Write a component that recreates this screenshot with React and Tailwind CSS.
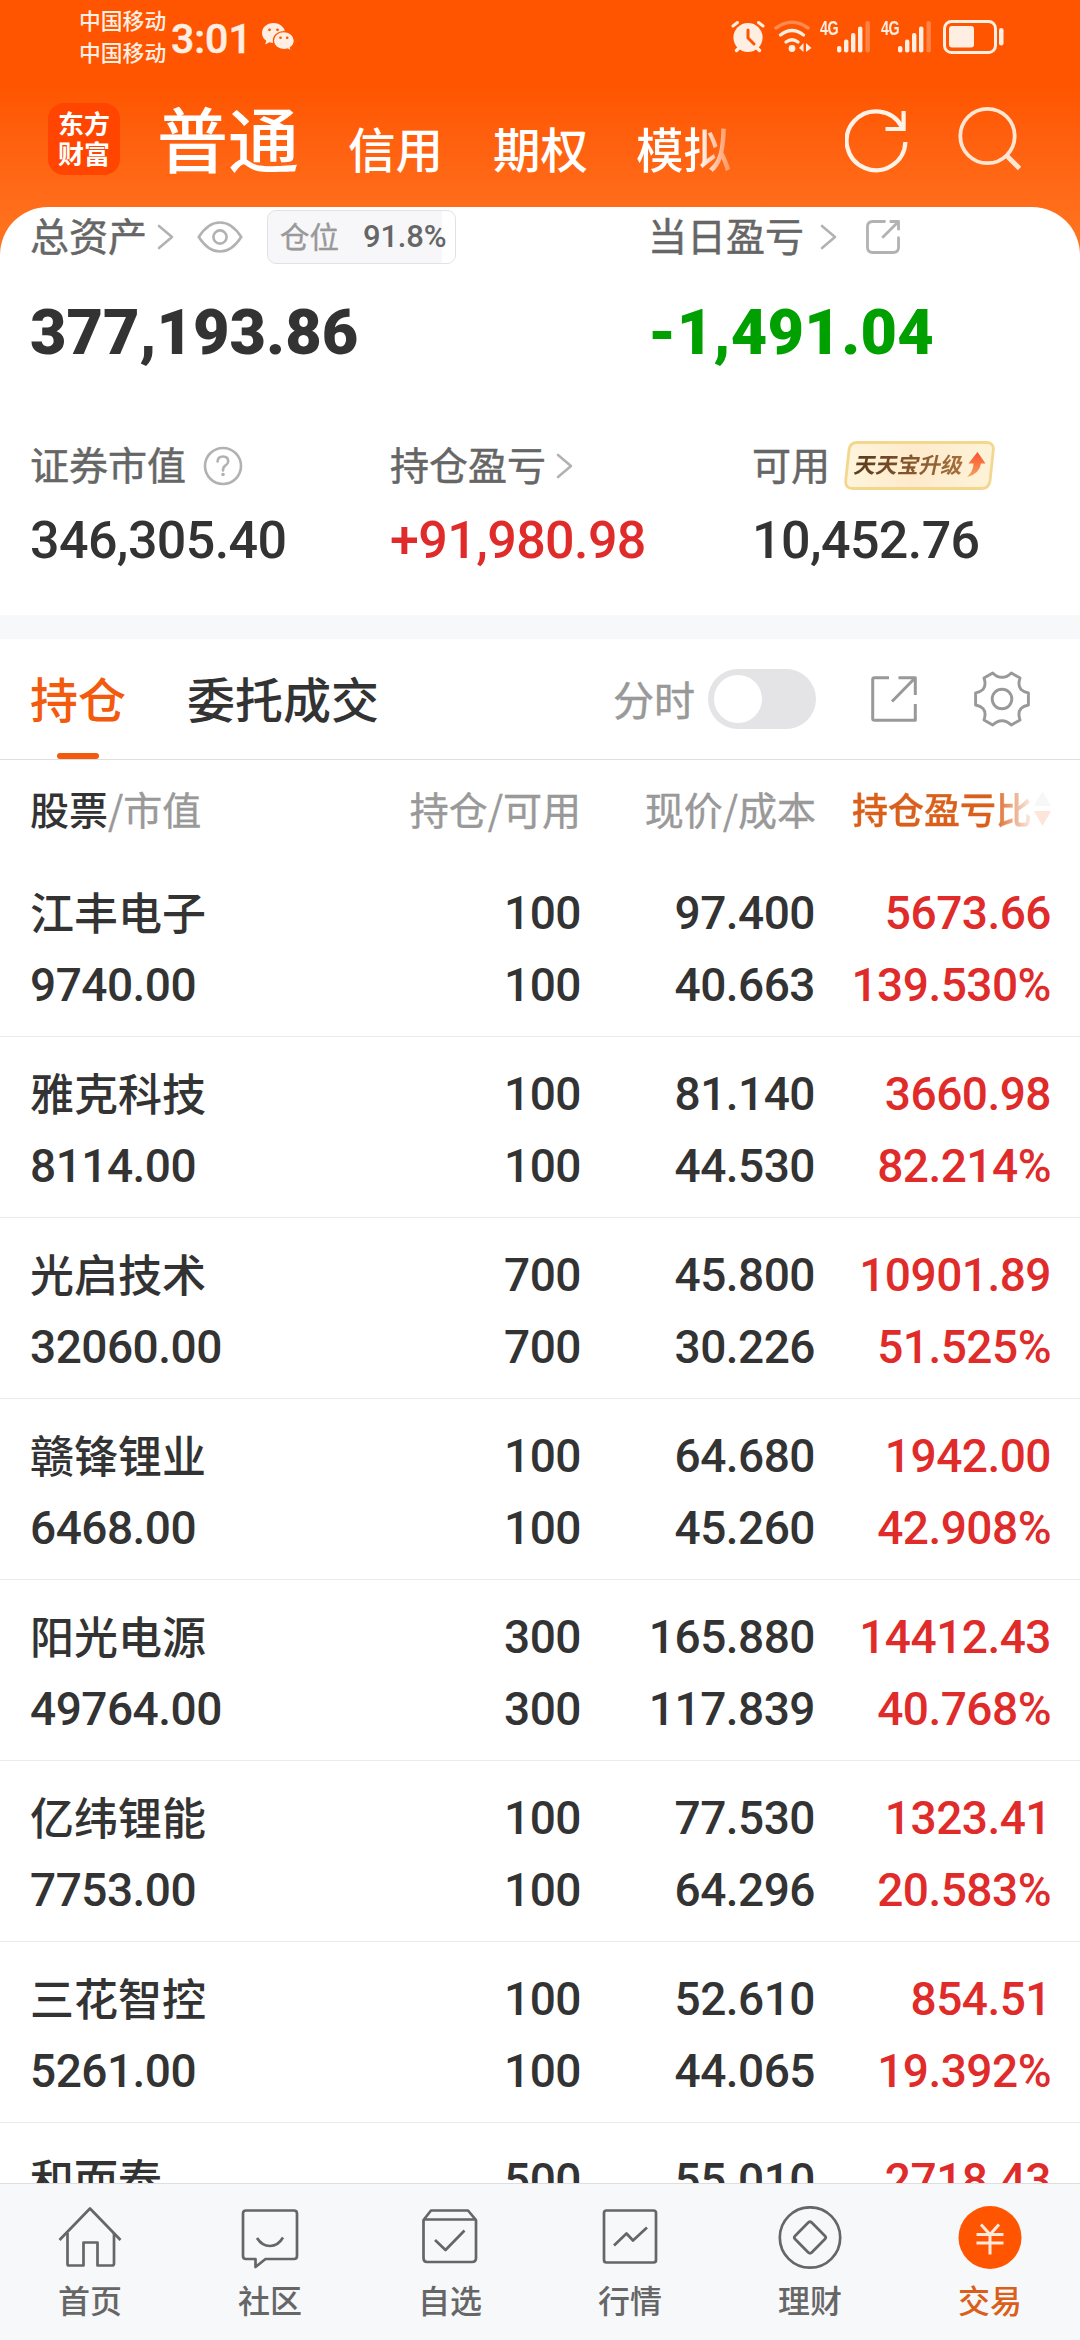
import React from "react";

const CJK = "font-['Noto_Sans_CJK_SC',sans-serif]";
const NUM = "font-['Roboto','Noto_Sans_CJK_SC',sans-serif]";

const holdings = [
  ["江丰电子", "9740.00", "100", "100", "97.400", "40.663", "5673.66", "139.530%"],
  ["雅克科技", "8114.00", "100", "100", "81.140", "44.530", "3660.98", "82.214%"],
  ["光启技术", "32060.00", "700", "700", "45.800", "30.226", "10901.89", "51.525%"],
  ["赣锋锂业", "6468.00", "100", "100", "64.680", "45.260", "1942.00", "42.908%"],
  ["阳光电源", "49764.00", "300", "300", "165.880", "117.839", "14412.43", "40.768%"],
  ["亿纬锂能", "7753.00", "100", "100", "77.530", "64.296", "1323.41", "20.583%"],
  ["三花智控", "5261.00", "100", "100", "52.610", "44.065", "854.51", "19.392%"],
  ["和而泰", "27505.00", "500", "500", "55.010", "49.573", "2718.43", "10.967%"],
];

function Chevron({ className }) {
  return (
    <svg className={className} width="17" height="26" viewBox="0 0 17 26" fill="none" stroke="#b2b2b2" strokeWidth="2.6" strokeLinecap="round" strokeLinejoin="round">
      <path d="M2 2 L15 13 L2 24" />
    </svg>
  );
}

function Signal() {
  return (
    <div className="flex h-[33px] w-[51px]">
      <span className="w-[17px] origin-left scale-x-[0.68] font-['Liberation_Sans',sans-serif] text-[21px] leading-[16px] font-bold tracking-[-0.500px]">4G</span>
      <svg width="34" height="33" viewBox="0 0 34 33" fill="#ffeee2">
        <rect x="0" y="26" width="4.4" height="6.5" rx="2" />
        <rect x="7" y="19.500" width="4.400" height="13" rx="2" />
        <rect x="14" y="13" width="4.4" height="19.500" rx="2" />
        <rect x="21" y="6.500" width="4.400" height="26" rx="2" />
        <rect x="28.500" y="1" width="4.400" height="31.500" rx="2" opacity="0.3" />
      </svg>
    </div>
  );
}

function StatusBar() {
  return (
    <div className="flex h-[76px] shrink-0 text-[#ffeee2]">
      <div className={`${CJK} ml-[79px] mt-[4px] w-[92px] text-[21.800px] leading-[31.500px] font-medium whitespace-nowrap`}>
        <div>中国移动</div>
        <div>中国移动</div>
      </div>
      <div className={`${NUM} mt-[18px] w-[91px] text-[41px] leading-[42px] font-medium whitespace-nowrap [-webkit-text-stroke:0.5px]`}>3:01</div>
      <svg className="mt-[23px]" width="33" height="28" viewBox="0 0 33 28">
        <path fill="#ffeee2" d="M11.500 0C5 0 0 4.400 0 10c0 3.200 1.700 6 4.300 7.800L3.200 21.500l4.300-2.200c1.300.4 2.600.6 4 .6C18 19.900 23 15.500 23 10S18 0 11.500 0Z" />
        <path fill="#ffeee2" stroke="#ff5500" strokeWidth="1.200" d="M21.800 8.700c-5.800 0-10.400 3.900-10.400 8.900s4.600 8.900 10.400 8.900c1.300 0 2.500-.2 3.600-.5l3.900 2-.9-3.300c2.400-1.600 3.900-4.100 3.900-7.100 0-5-4.700-8.900-10.500-8.900Z" />
        <g fill="#ff5500">
          <circle cx="7.500" cy="6.800" r="1.400" /><circle cx="15.500" cy="6.800" r="1.400" />
          <circle cx="18.500" cy="14.800" r="1.300" /><circle cx="25.200" cy="14.800" r="1.300" />
        </g>
      </svg>
      <div className="ml-[436px] mt-[20px] flex h-[34px]">
        <svg width="34" height="33" viewBox="0 0 34 33" fill="none">
          <path d="M2 6 L6.500 2.500 M32 6 L27.500 2.500" stroke="#ffeee2" strokeWidth="3" strokeLinecap="round" />
          <circle cx="17" cy="17.500" r="14.600" fill="#ffeee2" />
          <path d="M5.500 30.500 L8 28 M28.500 30.500 L26 28" stroke="#ffeee2" strokeWidth="3.400" strokeLinecap="round" />
          <path d="M17 10 V18 L23 24" stroke="#ff5500" strokeWidth="3" strokeLinecap="round" />
        </svg>
        <svg className="ml-[9px]" width="39" height="33" viewBox="0 0 39 33" fill="none" stroke="#ffeee2" strokeWidth="3.400" strokeLinecap="round">
          <path d="M2 8 Q18 -3.500 34 8" opacity="0.35" />
          <path d="M6.500 15 Q18 6 29.500 15" />
          <path d="M12 22 Q18 17.500 24 22" />
          <circle cx="18" cy="28.500" r="3.400" fill="#ffeee2" stroke="none" />
          <path d="M29.500 23 V32 L25 28 Z M32 23 V32 L37.500 28 Z" fill="#ffeee2" stroke="none" />
        </svg>
        <div className="ml-[7px]"><Signal /></div>
        <div className="ml-[10px]"><Signal /></div>
        <svg className="ml-[11px]" width="62" height="34" viewBox="0 0 62 34" fill="none">
          <rect x="1.500" y="1.500" width="51" height="31" rx="7" stroke="#ffeee2" strokeWidth="3" />
          <rect x="6" y="6" width="25" height="21.500" rx="3" fill="#ffeee2" />
          <rect x="56" y="8" width="4.500" height="17.500" rx="2.200" fill="#ffeee2" />
        </svg>
      </div>
    </div>
  );
}

function TopNav() {
  return (
    <div className={`${CJK} flex h-[131px] shrink-0 whitespace-nowrap text-white`}>
      <div className="ml-[48px] mt-[27px] h-[72px] w-[72px] rounded-[16px] bg-[#ff4500] pt-[5px] text-center text-[26px] leading-[30px] font-bold">
        东方<br />财富
      </div>
      <div className="ml-[37px] mt-[20px] w-[191px] text-[71px] leading-[80px] font-medium">普通</div>
      <div className="mt-[44px] flex text-[47.500px] leading-[56px] font-medium">
        <div className="w-[145px]">信用</div>
        <div className="w-[143px]">期权</div>
        <div className="w-[95px] bg-gradient-to-r from-white from-65% to-white/30 bg-clip-text text-transparent">模拟</div>
      </div>
      <svg className="ml-[114px] mt-[31px]" width="64" height="66" viewBox="0 0 64 66" fill="none" stroke="#fff3e8" strokeWidth="4.200">
        <path d="M57 20 A29.400 29.400 0 1 0 60.400 35" />
        <path d="M40.500 22 H58.600 V4" />
      </svg>
      <svg className="ml-[49px] mt-[30px]" width="64" height="66" viewBox="0 0 64 66" fill="none" stroke="#ffe6d2" strokeWidth="3.800">
        <circle cx="29.500" cy="30" r="27.200" />
        <path d="M48.500 49.500 L61.500 62.500" strokeWidth="4.800" />
      </svg>
    </div>
  );
}

function Share({ className, size, color, rounded }) {
  return (
    <svg className={className} width={size} height={size} viewBox="0 0 46 46" fill="none" stroke={color} strokeWidth={rounded ? 3.8 : 3} strokeLinejoin="round">
      {rounded ? (
        <path d="M25 2 H9 Q2 2 2 9 V37 Q2 44 9 44 H37 Q44 44 44 37 V24" strokeLinecap="round" />
      ) : (
        <path d="M18 1.700 H3.500 Q1.700 1.700 1.700 3.500 V42.500 Q1.700 44.300 3.500 44.300 H44.300 V28" />
      )}
      <path d={rounded ? "M22 24 L44 2 M32 2 H44 V14" : "M21 25.500 L43.500 2.500 M27.500 1.700 H44.300 V19"} />
    </svg>
  );
}

function UpgradeBadge() {
  return (
    <div className="relative ml-[14px] mt-[-1px] h-[49px] w-[151px]">
      <svg className="absolute inset-0" width="151" height="49" viewBox="0 0 151 49">
        <defs>
          <linearGradient id="badge" x1="0" x2="1"><stop offset="0" stopColor="#fdf5dc" /><stop offset="0.45" stopColor="#ffeacb" /><stop offset="1" stopColor="#fdf3d8" /></linearGradient>
          <linearGradient id="arrow" x1="0" y1="0" x2="0" y2="1"><stop offset="0" stopColor="#f9502e" /><stop offset="1" stopColor="#f6a25e" /></linearGradient>
        </defs>
        <path d="M13 1.500 H142 Q150 1.500 149.300 9 L146 40 Q145 47.500 137 47.500 H9 Q1 47.500 1.700 39.500 L5 9 Q6 1.500 13 1.500 Z" fill="url(#badge)" stroke="#f3d78f" strokeWidth="2.800" />
        <path d="M133.500 11 L141.500 22.500 H137 Q135.500 33 123 36 Q129.500 30 129.500 22.500 H124.500 Z" fill="url(#arrow)" />
      </svg>
      <span className={`${CJK} absolute left-[11px] top-[8px] -skew-x-12 bg-gradient-to-r from-[#5b3a1c] to-[#a9703c] bg-clip-text text-[21.700px] leading-[30px] font-bold whitespace-nowrap text-transparent`}>天天宝升级</span>
    </div>
  );
}

function Summary() {
  const label = "relative top-[-3px] text-[39px] leading-[48px] font-normal text-[#666] whitespace-nowrap [-webkit-text-stroke:0.5px]";
  const big = `${NUM} text-[63px] leading-[70px] font-black whitespace-nowrap`;
  const mid = `${NUM} text-[52px] leading-[60px] font-medium tracking-[-0.600px] whitespace-nowrap`;
  return (
    <div className={`${CJK} h-[408px] shrink-0 rounded-t-[48px] bg-white`}>
      <div className="flex h-[144px]">
        <div className="w-[648px] pl-[30px]">
          <div className="flex h-[60px] items-center">
            <span className={label}>总资产</span>
            <Chevron className="ml-[10px]" />
            <svg className="ml-[23px]" width="46" height="32" viewBox="0 0 46 32" fill="none" stroke="#b2b2b2" strokeWidth="2.600">
              <path d="M1.800 16 Q11 1.500 23 1.500 T44.200 16 Q35 30.500 23 30.500 T1.800 16 Z" />
              <circle cx="23" cy="16" r="6.600" />
            </svg>
            <div className="ml-[24px] flex h-[54px] w-[189px] items-center rounded-[9px] border border-[#e2e2e5] bg-linear-to-r from-[#f7f7fa] from-[93%] to-white to-[93%] pl-[12px]">
              <span className="mt-[-4px] text-[29.500px] leading-[40px] text-[#999] [-webkit-text-stroke:0.4px]">仓位</span>
              <span className="ml-[24px] font-['Roboto',sans-serif] text-[31px] leading-[40px] font-medium tracking-[-0.200px] text-[#666]">91.8%</span>
            </div>
          </div>
          <div className={`${big} mt-[31px] text-[#333]`}>377,193.86</div>
        </div>
        <div>
          <div className="flex h-[60px] items-center">
            <span className={label}>当日盈亏</span>
            <Chevron className="ml-[16px]" />
            <Share className="ml-[29px]" size="34" color="#b2b2b2" rounded />
          </div>
          <div className={`${big} mt-[31px] tracking-[0.300px] text-[#00a000]`}>-1,491.04</div>
        </div>
      </div>
      <div className="mt-[91px] flex">
        <div className="w-[390px] pl-[30px]">
          <div className="flex h-[48px] items-center">
            <span className={label}>证券市值</span>
            <svg className="ml-[17px]" width="40" height="40" viewBox="0 0 40 40" fill="none" stroke="#b2b2b2" strokeWidth="2.600">
              <circle cx="20" cy="20" r="18" />
              <path d="M14.600 15.500 Q14.800 10.500 20 10.500 T25.200 15.500 Q25 18 22.300 19.600 Q20 21 20 24.500" strokeLinecap="round" />
              <circle cx="20" cy="28.500" r="1.800" fill="#b2b2b2" stroke="none" />
            </svg>
          </div>
          <div className={`${mid} mt-[21px] text-[#333]`}>346,305.40</div>
        </div>
        <div className="w-[362px]">
          <div className="flex h-[48px] items-center">
            <span className={label}>持仓盈亏</span>
            <Chevron className="ml-[10px]" />
          </div>
          <div className={`${mid} mt-[21px] text-[#e02b2b]`}>+91,980.98</div>
        </div>
        <div>
          <div className="flex h-[48px] items-center">
            <span className={label}>可用</span>
            <UpgradeBadge />
          </div>
          <div className={`${mid} mt-[21px] text-[#333]`}>10,452.76</div>
        </div>
      </div>
    </div>
  );
}

function Tabs() {
  return (
    <div className={`${CJK} flex h-[121px] shrink-0 items-start border-b border-[#dedede] font-medium whitespace-nowrap`}>
      <div className="flex w-[156px] flex-col pl-[30px] text-[#f35a0e]">
        <span className="mt-[28px] text-[48px] leading-[60px]">持仓</span>
        <span className="ml-[27px] mt-[26px] h-[6px] w-[42px] rounded-full bg-[#f35a0e]" />
      </div>
      <span className="ml-[31px] mt-[28px] w-[426px] text-[48px] leading-[60px] text-[#333]">委托成交</span>
      <span className="mt-[34px] w-[95px] text-[41px] leading-[50px] font-normal text-[#999] [-webkit-text-stroke:0.5px]">分时</span>
      <div className="mt-[30px] h-[60px] w-[108px] rounded-full bg-[#e4e4e6] p-[6px]">
        <div className="h-[48px] w-[48px] rounded-full bg-white" />
      </div>
      <Share className="ml-[55px] mt-[37px]" size="46" color="#999" />
      <svg className="ml-[57px] mt-[32px]" width="56" height="56" viewBox="0 0 56 56" fill="none" stroke="#999" strokeWidth="2.900" strokeLinejoin="round">
        <path d="M18.700 1.900 L10 7 Q12.500 14.500 9 18.500 Q6.500 20.800 1.600 22 V34 Q6.500 35.200 9 37.500 Q12.500 41.500 10 49 L18.700 54.100 Q23 49.700 28 49.700 T37.300 54.100 L46 49 Q43.500 41.500 47 37.500 Q49.500 35.200 54.400 34 V22 Q49.500 20.800 47 18.500 Q43.500 14.500 46 7 L37.300 1.900 Q33 6.300 28 6.300 T18.700 1.900 Z" />
        <circle cx="28" cy="28" r="9.800" />
      </svg>
    </div>
  );
}

function TableHead() {
  return (
    <div className={`${CJK} grid h-[96px] shrink-0 grid-cols-[300px_251px_235px_235px] items-center pl-[30px] text-[39px] leading-[50px] whitespace-nowrap text-[#999] [-webkit-text-stroke:0.4px]`}>
      <div><span className="font-medium text-[#333] [-webkit-text-stroke:0]">股票</span>/市值</div>
      <div className="text-right">持仓/可用</div>
      <div className="text-right">现价/成本</div>
      <div className="flex items-center justify-end">
        <span className="bg-gradient-to-r from-[#d95f1a] from-78% to-[#d95f1a]/10 bg-clip-text text-[36px] font-medium text-transparent">持仓盈亏比</span>
        <svg className="ml-[2px]" width="17" height="35" viewBox="0 0 17 35">
          <path d="M8.500 0 L17 15 H0 Z" fill="#f7f7f7" />
          <path d="M8.500 35 L17 20 H0 Z" fill="#fde5d9" />
        </svg>
      </div>
    </div>
  );
}

function Row({ data }) {
  const [name, value, qty, avail, price, cost, pl, pct] = data;
  return (
    <div className={`${NUM} grid h-[181px] shrink-0 grid-cols-[300px_251px_234px_236px] grid-rows-[72px_72px] border-b border-[#ebebeb] pl-[30px] pt-[21px] text-right text-[46px] leading-[72px] font-medium tracking-[-0.500px] whitespace-nowrap text-[#333]`}>
      <span className={`${CJK} mt-[-2px] text-left text-[44px] tracking-normal`}>{name}</span>
      <span>{qty}</span>
      <span>{price}</span>
      <span className="text-[#e02b2b]">{pl}</span>
      <span className="text-left">{value}</span>
      <span>{avail}</span>
      <span>{cost}</span>
      <span className="text-[#e02b2b]">{pct}</span>
    </div>
  );
}

const icons = {
  home: <><path d="M1.500 34 L32 2.500 L62.500 34" /><path d="M9.500 27 V58 Q9.500 59.500 11 59.500 H25.500 V36.500 H39.500 V59.500 H54 Q56 59.500 56 57.500 V27" /></>,
  chat: <><path d="M8 4.500 H56 Q59 4.500 59 7.500 V50 Q59 53 56 53 H27.500 L17.500 61 V53 H8 Q5 53 5 50 V7.500 Q5 4.500 8 4.500 Z" /><path d="M19 32 Q24 40 32 40 T45 31.500" /></>,
  pick: <><path d="M5.500 14 L13 4.500 H50 L58 14 V52 Q58 56 54 56 H9 Q5.500 56 5.500 52 Z M5.500 13.500 H58" /><path d="M17 34 L27.500 44 L46.500 24.500" /></>,
  chart: <><rect x="6" y="4.500" width="52" height="52" rx="2.500" /><path d="M16 39.500 L28.500 27.500 L35 34.500 L49 21.500" /></>,
  wealth: <><circle cx="32" cy="31.500" r="30.200" /><path d="M30.300 16.500 Q32 15 33.700 16.500 L47 30 Q48.500 31.500 47 33 L33.700 46.500 Q32 48 30.300 46.500 L17 33 Q15.500 31.500 17 30 Z" /></>,
};

function BottomNav() {
  const items = [["home", "首页"], ["chat", "社区"], ["pick", "自选"], ["chart", "行情"], ["wealth", "理财"]];
  return (
    <div className={`${CJK} flex h-[157px] shrink-0 border-t border-[#dedede] bg-[#f7f8fa] text-[32px] leading-[44px] font-medium text-[#666]`}>
      {items.map(([k, t]) => (
        <div key={k} className="flex w-[180px] flex-col items-center pt-[22px]">
          <svg width="64" height="66" viewBox="0 0 64 66" fill="none" stroke="#666" strokeWidth="2.700" strokeLinejoin="round">{icons[k]}</svg>
          <span className="mt-[5px]">{t}</span>
        </div>
      ))}
      <div className="flex w-[180px] flex-col items-center pt-[22px] text-[#d95f1a]">
        <svg width="64" height="66" viewBox="0 0 64 66" fill="none">
          <circle cx="32" cy="31.500" r="31.500" fill="#ff5500" />
          <path d="M23 18.500 L32 28.500 L41 18.500 M32 28.500 V48.500 M18.500 28.500 H45.500 M18.500 37 H45.500" stroke="#ffe9dc" strokeWidth="3" />
        </svg>
        <span className="mt-[5px]">交易</span>
      </div>
    </div>
  );
}

export default function App() {
  return (
    <div className="flex h-[2340px] w-[1080px] flex-col overflow-hidden bg-white">
      <div className="flex shrink-0 flex-col bg-linear-to-b from-[#ff5500] from-[14%] to-[#ff7420] to-[40%]">
        <StatusBar />
        <TopNav />
        <Summary />
      </div>
      <div className="h-[24px] shrink-0 bg-[#f7f8fa]" />
      <Tabs />
      <div className="flex min-h-0 flex-1 flex-col overflow-hidden">
        <TableHead />
        {holdings.map((h) => <Row key={h[0]} data={h} />)}
      </div>
      <BottomNav />
    </div>
  );
}
